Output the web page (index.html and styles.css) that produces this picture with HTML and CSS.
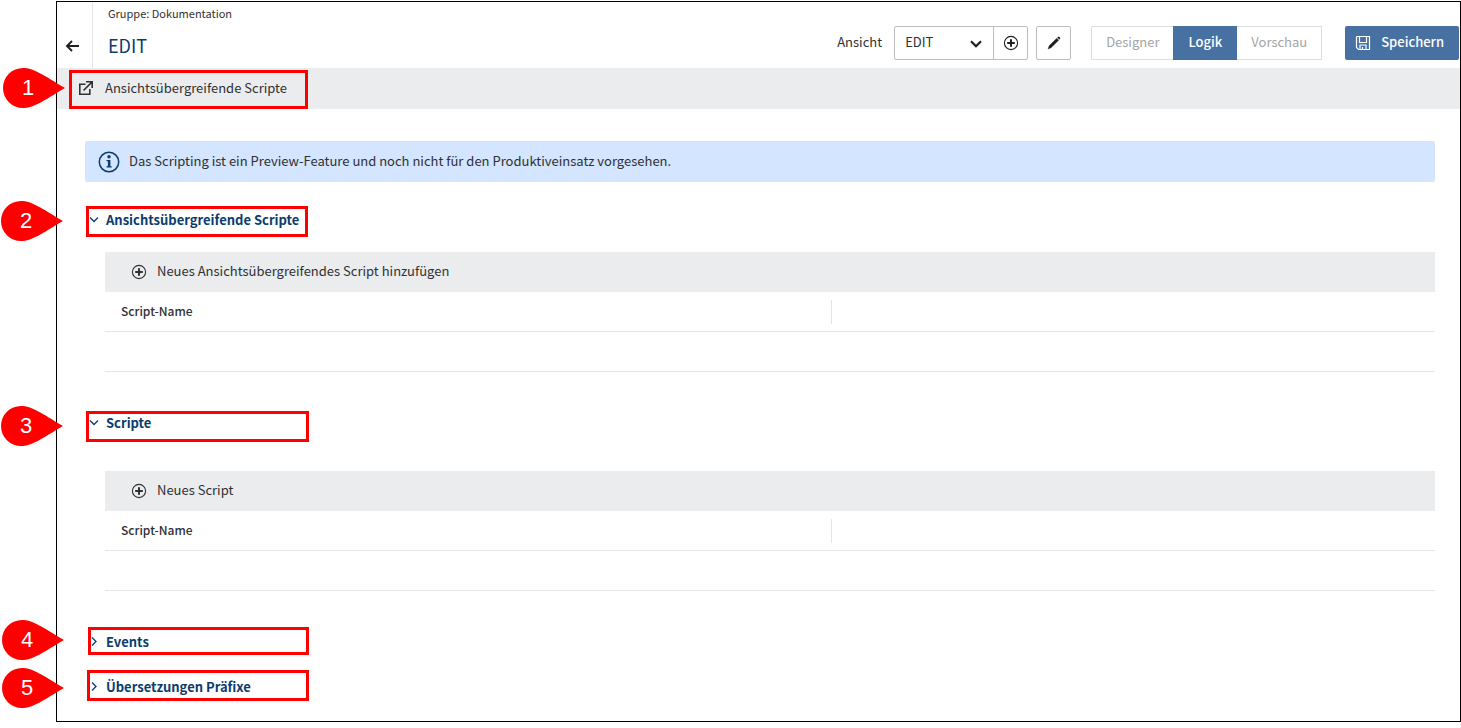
FILE: index.html
```html
<!DOCTYPE html>
<html lang="de">
<head>
<meta charset="utf-8">
<title>EDIT</title>
<link rel="stylesheet" href="styles.css">
</head>
<body>
<svg width="0" height="0" class="defs" aria-hidden="true">
  <symbol id="plus" viewBox="0 0 16 16"><circle cx="8" cy="8" r="6.6" fill="none" stroke="currentColor" stroke-width="1.1"/><path d="M8 4.2v7.6M4.2 8h7.6" stroke="currentColor" stroke-width="2"/></symbol>
  <symbol id="down" viewBox="0 0 10 10"><path d="M1 2.500 5 6.500l4-4" fill="none" stroke="currentColor" stroke-width="1.300"/></symbol>
  <symbol id="right" viewBox="0 0 10 10"><path d="M3 .500 7 4.500 3 8.500" fill="none" stroke="currentColor" stroke-width="1.300"/></symbol>
  <symbol id="pin" viewBox="0 0 62 40"><path d="M20 0C31 0 40 7 62 20C40 33 31 40 20 40A20 20 0 0 1 20 0Z" fill="#f00"/></symbol>
</svg>
<div class="frame">
  <header class="header">
    <button class="back" aria-label="Zurück"><svg width="16" height="14" viewBox="0 0 16 14"><path d="M14 7H2.500M7 2 2 7l5 5" fill="none" stroke="currentColor" stroke-width="1.900"/></svg></button>
    <div class="titles">
      <p class="group">Gruppe: Dokumentation</p>
      <h1 class="title">EDIT</h1>
    </div>
    <div class="actions">
      <label class="view-label" for="view">Ansicht</label>
      <div class="view">
        <select id="view" class="view-select"><option>EDIT</option></select>
        <svg class="view-arrow" width="12" height="10" viewBox="0 0 12 10"><path d="M1 2.200 6 7.200l5-5" fill="none" stroke="currentColor" stroke-width="2.200"/></svg>
        <button class="square joined" aria-label="Ansicht hinzufügen"><svg width="16" height="16"><use href="#plus"/></svg></button>
      </div>
      <button class="square pencil" aria-label="Ansicht bearbeiten"><svg width="14" height="14" viewBox="0 0 14 14"><path d="M1 13l1.100-3.200L9.700 2.300l2 2L4.100 11.800ZM10.400 1.700l.9-.8q.6-.3 1 .1l.7.700q.3.500 0 .900l-.8.900Z" fill="currentColor" stroke="currentColor" stroke-width=".3"/></svg></button>
      <div class="modes">
        <button class="mode">Designer</button>
        <button class="mode active">Logik</button>
        <button class="mode">Vorschau</button>
      </div>
      <button class="save"><svg width="16" height="16" viewBox="0 0 16 16" fill="none" stroke="currentColor" stroke-width="1.200"><path d="M1.500 2.500q0-1 1-1h12v13h-11l-2-2ZM4.500 1.500v6h7v-6M5 14.500v-4.500h6v4.500M7.500 12v2.500"/></svg><span class="save-text">Speichern</span></button>
    </div>
  </header>
  <div class="toolbar">
    <button class="tool"><svg width="16" height="16" viewBox="0 0 16 16" fill="none" stroke="currentColor" stroke-width="1.600"><path d="M7.500 4.300H1.800v10h10V9M5.500 10.500 13.600 2.400M8 1.800h6.200V8"/></svg>Ansichtsübergreifende Scripte</button>
  </div>
  <main class="content">
    <p class="info"><svg width="22" height="22" viewBox="0 0 22 22"><circle cx="11" cy="11" r="9.700" fill="none" stroke="currentColor" stroke-width="1.500"/><circle cx="11" cy="5.800" r="1.700" fill="currentColor"/><path d="M8.500 9h3.900v6.200h1.300v1.300H8.500v-1.300h1.400v-4.900H8.500Z" fill="currentColor"/></svg><span class="lift">Das Scripting ist ein Preview-Feature und noch nicht für den Produktiveinsatz vorgesehen.</span></p>
    <section class="section">
      <h2><button class="fold" aria-expanded="true"><svg width="10" height="10"><use href="#down"/></svg>Ansichtsübergreifende Scripte</button></h2>
      <div class="panel">
        <button class="add"><svg width="16" height="16"><use href="#plus"/></svg><span class="lift">Neues Ansichtsübergreifendes Script hinzufügen</span></button>
        <table class="scripts">
          <thead><tr><th class="name">Script-Name</th><th><span class="rule"></span></th></tr></thead>
          <tbody><tr><td></td><td></td></tr></tbody>
        </table>
      </div>
    </section>
    <section class="section">
      <h2><button class="fold" aria-expanded="true"><svg width="10" height="10"><use href="#down"/></svg>Scripte</button></h2>
      <div class="panel spaced">
        <button class="add"><svg width="16" height="16"><use href="#plus"/></svg><span class="lift">Neues Script</span></button>
        <table class="scripts">
          <thead><tr><th class="name">Script-Name</th><th><span class="rule"></span></th></tr></thead>
          <tbody><tr><td></td><td></td></tr></tbody>
        </table>
      </div>
    </section>
    <section class="section closed">
      <h2><button class="fold" aria-expanded="false"><svg width="10" height="10"><use href="#right"/></svg>Events</button></h2>
    </section>
    <section class="section closed">
      <h2><button class="fold" aria-expanded="false"><svg width="10" height="10"><use href="#right"/></svg>Übersetzungen Präfixe</button></h2>
    </section>
  </main>
</div>
<div class="box box-1"></div><div class="box box-2"></div><div class="box box-3"></div><div class="box box-4"></div><div class="box box-5"></div>
<div class="pin pin-1"><svg width="62" height="40"><use href="#pin"/></svg><span>1</span></div>
<div class="pin pin-2"><svg width="62" height="40"><use href="#pin"/></svg><span>2</span></div>
<div class="pin pin-3"><svg width="62" height="40"><use href="#pin"/></svg><span>3</span></div>
<div class="pin pin-4"><svg width="62" height="40"><use href="#pin"/></svg><span>4</span></div>
<div class="pin pin-5"><svg width="62" height="40"><use href="#pin"/></svg><span>5</span></div>
</body>
</html>
```
FILE: styles.css
```css
* { box-sizing: border-box; }
body {
  margin: 0;
  padding: 1px 0 0 56px;
  background: #fff;
  color: #2f3133;
  font: 13px/20px "Noto Sans CJK SC", "Noto Sans", sans-serif;
}
h1, h2, p { margin: 0; }
button, select { font: inherit; color: inherit; background: none; border: 0; padding: 0; margin: 0; }
svg { display: block; flex: none; }
.defs { position: absolute; }
.frame { border: 1px solid #000; padding-bottom: 19px; }

.header { display: flex; height: 66px; }
.back { width: 36px; padding: 22px 0 0 8px; border-right: 1px solid #e4e5e6; color: #1d1f21; }
.titles { padding: 1px 0 0 15px; }
.group { font-size: 11px; }
.title { padding-top: 10px; font-size: 18px; line-height: 24px; font-weight: 400; color: #0b3c6e; }
.actions { display: flex; align-items: center; margin-left: auto; padding: 16px 1px 0 0; }
.view-label { margin-right: 12px; padding-bottom: 2px; }
.view { display: flex; position: relative; margin-right: 8px; }
.view-select { width: 100px; height: 34px; padding: 0 10px 2px; border: 1px solid #bcbdbf; border-radius: 2px 0 0 2px; appearance: none; }
.view-arrow { position: absolute; left: 76px; top: 13px; color: #1d1f21; pointer-events: none; }
.square { display: flex; align-items: center; justify-content: center; width: 35px; height: 34px; border: 1px solid #bcbdbf; border-radius: 2px; color: #1d1f21; }
.joined { margin-left: -1px; border-radius: 0 2px 2px 0; }
.modes { display: flex; margin: 0 23px 0 20px; }
.mode { height: 34px; padding: 0 14px 2px; border: 1px solid #dddedf; color: #a3a4a6; }
.mode:first-child { border-right: 0; border-radius: 2px 0 0 2px; }
.mode:last-child { border-left: 0; }
.mode.active { border-color: #4871a3; color: #fff; }
.active, .save { background: #4871a3; color: #fff; font-weight: 500; }
.save { display: flex; align-items: center; gap: 10px; height: 34px; padding: 0 15px 0 10px; border-radius: 2px; }
.save-text, .lift { padding-bottom: 2px; }

.toolbar { height: 41px; padding: 10px 21px; background: #ebecee; }
.tool { display: flex; align-items: center; gap: 11px; }

.content { padding: 32px 25px 0 28px; }
.info { display: flex; align-items: center; gap: 9px; height: 41px; margin-bottom: 23px; padding: 0 13px; border-radius: 2px; background: #d3e5ff; }
.info svg { color: #0b3c6e; }
.section { margin-bottom: 36px; }
.closed { margin-bottom: 15px; }
.closed:last-child { margin-bottom: 0; }
.fold { display: flex; align-items: center; gap: 7px; height: 30px; padding-left: 4px; font-size: 13px; font-weight: 700; line-height: 20px; color: #0b3c6e; }
.panel { margin: 17px 0 0 20px; }
.spaced { margin-top: 33px; }
h2 { height: 30px; }
.add { display: flex; align-items: center; gap: 10px; width: 100%; height: 40px; padding: 0 26px; background: #ebecee; }
.scripts { width: 100%; table-layout: fixed; border-collapse: separate; border-spacing: 0; }
.scripts th, .scripts td { height: 40px; padding: 0; border-bottom: 1px solid #e4e5e6; text-align: left; }
.scripts .name { width: 54.6%; padding: 0 0 2px 16px; font-size: 12px; font-weight: 500; }
.rule { display: block; height: 24px; border-left: 1px solid #e4e5e6; }

.box { position: absolute; border: 3px solid #f00; pointer-events: none; }
.box-1 { left: 69px; top: 70px; width: 239px; height: 39px; }
.box-2 { left: 86px; top: 206px; width: 222px; height: 31px; }
.box-3 { left: 86px; top: 411px; width: 223px; height: 31px; }
.box-4 { left: 88px; top: 627px; width: 221px; height: 28px; }
.box-5 { left: 87px; top: 670px; width: 222px; height: 31px; }
.pin { position: absolute; color: #fff; font: 22px/40px "Liberation Sans", Arial, sans-serif; }
.pin span { position: absolute; left: 0; top: 0; width: 50px; text-align: center; }
.pin-1 { left: 3px; top: 68px; }
.pin-2 { left: 1px; top: 201px; }
.pin-3 { left: 1px; top: 406px; }
.pin-4 { left: 2px; top: 620px; }
.pin-5 { left: 2px; top: 668px; }
```
